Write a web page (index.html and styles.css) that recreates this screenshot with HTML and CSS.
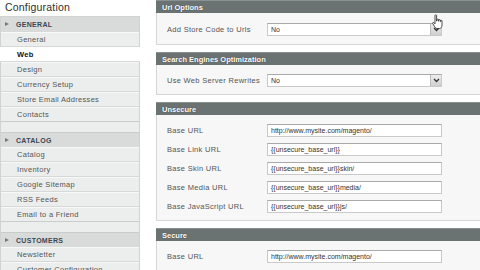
FILE: index.html
```html
<!DOCTYPE html>
<html>
<head>
<meta charset="utf-8">
<link rel="stylesheet" href="styles.css">
</head>
<body>
<div class="page">
  <aside class="side">
    <div class="side-title">Configuration</div>
    <div class="side-box">
      <div class="group">
        <div class="group-head"><span class="tri"></span>GENERAL</div>
        <div class="item">General</div>
        <div class="item active">Web</div>
        <div class="item">Design</div>
        <div class="item">Currency Setup</div>
        <div class="item">Store Email Addresses</div>
        <div class="item last">Contacts</div>
      </div>
      <div class="group">
        <div class="group-head"><span class="tri"></span>CATALOG</div>
        <div class="item">Catalog</div>
        <div class="item">Inventory</div>
        <div class="item">Google Sitemap</div>
        <div class="item">RSS Feeds</div>
        <div class="item last">Email to a Friend</div>
      </div>
      <div class="group">
        <div class="group-head"><span class="tri"></span>CUSTOMERS</div>
        <div class="item">Newsletter</div>
        <div class="item">Customer Configuration</div>
      </div>
    </div>
  </aside>
  <main class="main">
    <section class="fs">
      <div class="fs-head">Url Options</div>
      <div class="fs-body">
        <div class="row"><label>Add Store Code to Urls</label><div class="select">No<span class="arrow"><svg width="7" height="5" viewBox="0 0 7 5"><path d="M1 1 L3.5 3.5 L6 1" fill="none" stroke="#333" stroke-width="1.3"/></svg></span></div></div>
      </div>
    </section>
    <section class="fs">
      <div class="fs-head">Search Engines Optimization</div>
      <div class="fs-body">
        <div class="row"><label>Use Web Server Rewrites</label><div class="select">No<span class="arrow"><svg width="7" height="5" viewBox="0 0 7 5"><path d="M1 1 L3.5 3.5 L6 1" fill="none" stroke="#333" stroke-width="1.3"/></svg></span></div></div>
      </div>
    </section>
    <section class="fs">
      <div class="fs-head">Unsecure</div>
      <div class="fs-body">
        <div class="row"><label>Base URL</label><div class="input">http://www.mysite.com/magento/</div></div>
        <div class="row"><label>Base Link URL</label><div class="input">{{unsecure_base_url}}</div></div>
        <div class="row"><label>Base Skin URL</label><div class="input">{{unsecure_base_url}}skin/</div></div>
        <div class="row"><label>Base Media URL</label><div class="input">{{unsecure_base_url}}media/</div></div>
        <div class="row"><label>Base JavaScript URL</label><div class="input">{{unsecure_base_url}}js/</div></div>
      </div>
    </section>
    <section class="fs">
      <div class="fs-head">Secure</div>
      <div class="fs-body">
        <div class="row"><label>Base URL</label><div class="input">http://www.mysite.com/magento/</div></div>
      </div>
    </section>
  </main>
  <svg class="cursor" width="12" height="16" viewBox="0 0 12 16">
    <path d="M3 1.5 C3 0.6 4.6 0.6 4.6 1.5 L4.6 7 L5 7 L5 5.6 C5 4.8 6.5 4.8 6.5 5.6 L6.5 7.2 L6.8 7.2 L6.8 6.2 C6.8 5.4 8.3 5.4 8.3 6.2 L8.3 7.6 L8.6 7.6 L8.6 6.9 C8.6 6.1 10 6.1 10 6.9 L10 11 C10 13 9 14.5 7.5 14.5 L5 14.5 C3.8 14.5 3.2 13.5 2.4 12.3 L0.8 9.6 C0.3 8.8 1.3 8 2 8.7 L3 9.8 Z" fill="#fff" stroke="#222" stroke-width="0.8"/>
  </svg>
</div>
</body>
</html>
```
FILE: styles.css
```css
* { box-sizing: border-box; }
html, body { margin: 0; padding: 0; background: #fff; }
body {
  font-family: "Liberation Sans", Arial, sans-serif;
  font-size: 7.5px;
  color: #444;
  width: 480px;
  height: 270px;
  overflow: hidden;
}
.page {
  position: relative;
  display: flex;
  align-items: flex-start;
  gap: 16px;
}
.side {
  width: 140px;
  flex: none;
}
.side-title {
  height: 16px;
  padding-left: 5px;
  font-size: 10.5px;
  line-height: 14px;
  color: #2f2f2f;
  letter-spacing: 0.2px;
}
.side-box {
  border: 1px solid #d0d3d2;
  border-bottom: none;
  background: #eceeed;
}
.group { padding-bottom: 10px; }
.group:last-child { padding-bottom: 0; }
.group-head {
  position: relative;
  height: 15px;
  line-height: 15px;
  padding-left: 15px;
  background: #d8dbda;
  border-top: 1px solid #c8cccb;
  color: #3c4856;
  font-size: 7px;
  font-weight: bold;
  letter-spacing: 0.3px;
}
.group:first-child .group-head { border-top: none; }
.tri {
  position: absolute;
  left: 4px;
  top: 5px;
  width: 0;
  height: 0;
  border-left: 4px solid #777;
  border-top: 2.5px solid transparent;
  border-bottom: 2.5px solid transparent;
}
.item {
  height: 15px;
  line-height: 14px;
  padding-left: 16px;
  border-bottom: 1px solid #d6d9d8;
  border-top: 1px solid #f7f8f8;
  color: #555;
  letter-spacing: 0.3px;
}
.item.last { border-bottom: 1px solid #c9cdcc; }
.item.active {
  background: #fff;
  color: #111;
  font-weight: bold;
  border-top-color: #fff;
  margin: 0 -1px;
  padding-left: 17px;
}
.main {
  flex: 1;
  display: flex;
  flex-direction: column;
  gap: 7px;
  margin-right: -20px;
}
.fs-head {
  height: 13px;
  line-height: 13px;
  background: #6b7372;
  border-top: 1px solid #8a9291;
  color: #fff;
  font-weight: bold;
  font-size: 7.5px;
  padding-left: 6px;
  text-shadow: 0 0 1px #333;
}
.fs-body {
  background: #f7f7f7;
  border: 1px solid #d6d6d6;
  border-top: none;
  padding: 9px 0 7px 10px;
  display: flex;
  flex-direction: column;
  gap: 6px;
}
.fs:first-child .fs-body { padding-top: 10px; padding-bottom: 8px; }
.row {
  display: flex;
  align-items: center;
  height: 13px;
}
.row label {
  width: 100px;
  flex: none;
  color: #555;
  letter-spacing: 0.3px;
}
.input, .select {
  position: relative;
  width: 175px;
  height: 13px;
  line-height: 12px;
  background: #fff;
  border: 1px solid #c9c9c9;
  border-top-color: #a9a9a9;
  padding-left: 3px;
  font-size: 7px;
  color: #333;
}
.arrow {
  position: absolute;
  right: 0;
  top: 0;
  width: 11px;
  height: 11px;
  background: linear-gradient(#eee, #cfcfcf);
  border-left: 1px solid #bbb;
  display: flex;
  align-items: center;
  justify-content: center;
}
.cursor {
  position: absolute;
  left: 432px;
  top: 14px;
}
```
